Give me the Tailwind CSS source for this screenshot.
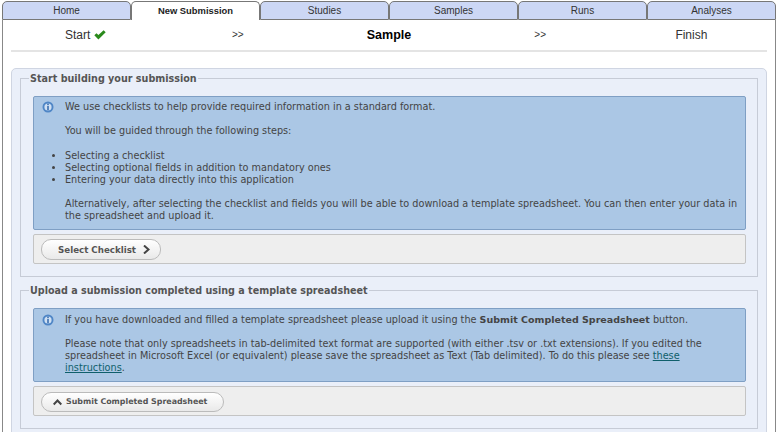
<!DOCTYPE html>
<html><head><meta charset="utf-8"><script src="https://cdn.jsdelivr.net/npm/@tailwindcss/browser@4"></script></head>
<body class="bg-white overflow-hidden">
<div class="w-[780px] h-[432px] overflow-hidden pl-[2px] pr-[4px] pt-[1px] font-['Liberation_Sans',sans-serif]">
  <nav class="flex h-[19px] text-[10px] text-[#333]">
    <div class="flex-1 flex items-center justify-center bg-[#ccd7f5] border border-[#777] rounded-t-[5px]">Home</div>
    <div class="flex-1 flex items-center justify-center bg-white border border-[#777] border-b-0 rounded-t-[5px] font-bold text-[#222] text-[9.4px]">New Submission</div>
    <div class="flex-1 flex items-center justify-center bg-[#ccd7f5] border border-[#777] rounded-t-[5px]">Studies</div>
    <div class="flex-1 flex items-center justify-center bg-[#ccd7f5] border border-[#777] rounded-t-[5px]">Samples</div>
    <div class="flex-1 flex items-center justify-center bg-[#ccd7f5] border border-[#777] rounded-t-[5px]">Runs</div>
    <div class="flex-1 flex items-center justify-center bg-[#ccd7f5] border border-[#777] rounded-t-[5px]">Analyses</div>
  </nav>
  <div class="border-x border-[#888] h-[412px] px-[8px]">
    <div class="grid grid-cols-5 h-[32px] items-center border-b-2 border-[#e4e4e4] text-[12px] text-[#333]">
      <div class="flex items-center justify-center gap-[4px] pr-[2px]"><span>Start</span>
        <svg width="12" height="10" viewBox="0 0 12 10"><path d="M0.3 5.3 L2.5 3.2 L4.4 5 L9.6 0.2 L11.7 2.2 L4.4 9.6 Z" fill="#2a8a1c"/></svg></div>
      <div class="text-center text-[10px] pb-[1px]">&gt;&gt;</div>
      <div class="text-center font-bold text-black text-[12.5px]">Sample</div>
      <div class="text-center text-[10px] pb-[1px]">&gt;&gt;</div>
      <div class="text-center">Finish</div>
    </div>
    <div class="mt-[16px] bg-[#eaeff9] border border-[#cfd5e2] rounded-[5px] px-[8px] pt-[1px] pb-[10px] font-['DejaVu_Sans',sans-serif] text-[9.7px] leading-[12px] text-[#444]">
      <fieldset class="border border-[#c6cbd6] pl-[12px] pr-[11px] pb-[12px] m-0 min-w-0 h-[207px]">
        <legend class="font-bold text-[#555] text-[9.6px] leading-[14px] pt-[2px] -ml-[4px] px-[1px]">Start building your submission</legend>
        <div class="mt-[10px] bg-[#abc7e5] border border-[#7f9fc4] rounded-[2px] pl-[31px] pr-[6px] pt-[4px] pb-[3px] h-[134px] relative">
          <svg class="absolute left-[8px] top-[4px]" width="12" height="12" viewBox="0 0 12 12"><circle cx="6" cy="6" r="5.5" fill="#4f86c6"/><circle cx="6" cy="6" r="3.6" fill="#cfe0f3"/><rect x="5.2" y="2.6" width="1.6" height="1.6" fill="#3b6fb0"/><rect x="5.2" y="5" width="1.6" height="4.2" fill="#3b6fb0"/></svg>
          <p>We use checklists to help provide required information in a standard format.</p>
          <p class="mt-[12px]">You will be guided through the following steps:</p>
          <ul class="mt-[12.5px] list-disc">
            <li>Selecting a checklist</li>
            <li>Selecting optional fields in addition to mandatory ones</li>
            <li>Entering your data directly into this application</li>
          </ul>
          <p class="mt-[12px]">Alternatively, after selecting the checklist and fields you will be able to download a template spreadsheet. You can then enter your data in the spreadsheet and upload it.</p>
        </div>
        <div class="mt-[4px] h-[30px] bg-[#eeeeee] border border-[#c4c4c4] rounded-[2px] pl-[7px] pt-[4px]">
          <button class="flex items-center gap-[7px] pl-[16px] w-[120px] h-[21px] bg-gradient-to-b from-white to-[#e9e9e9] border border-[#bbb] rounded-[10px] font-bold text-[#555] text-[8.7px]">Select Checklist
            <svg width="7" height="9" viewBox="0 0 7 9"><path d="M1 0.5 L5.5 4.5 L1 8.5" fill="none" stroke="#444" stroke-width="2"/></svg></button>
        </div>
      </fieldset>
      <fieldset class="mt-[5px] border border-[#c6cbd6] pl-[12px] pr-[11px] pb-[12px] m-0 min-w-0">
        <legend class="font-bold text-[#555] text-[9.6px] leading-[14px] pt-[2px] -ml-[4px] px-[1px]">Upload a submission completed using a template spreadsheet</legend>
        <div class="mt-[10px] bg-[#abc7e5] border border-[#7f9fc4] rounded-[2px] pl-[31px] pr-[6px] pt-[5px] h-[74px] relative">
          <svg class="absolute left-[8px] top-[5px]" width="12" height="12" viewBox="0 0 12 12"><circle cx="6" cy="6" r="5.5" fill="#4f86c6"/><circle cx="6" cy="6" r="3.6" fill="#cfe0f3"/><rect x="5.2" y="2.6" width="1.6" height="1.6" fill="#3b6fb0"/><rect x="5.2" y="5" width="1.6" height="4.2" fill="#3b6fb0"/></svg>
          <p>If you have downloaded and filled a template spreadsheet please upload it using the <b class="text-[9.5px]">Submit Completed Spreadsheet</b> button.</p>
          <p class="mt-[12px]">Please note that only spreadsheets in tab-delimited text format are supported (with either .tsv or .txt extensions). If you edited the spreadsheet in Microsoft Excel (or equivalent) please save the spreadsheet as Text (Tab delimited). To do this please see <a class="text-[#0f5f6b] underline">these</a> <a class="text-[#0f5f6b] underline">instructions</a>.</p>
        </div>
        <div class="mt-[4px] h-[30px] bg-[#eeeeee] border border-[#c4c4c4] rounded-[2px] pl-[7px] pt-[5px]">
          <button class="flex items-center gap-[4px] pl-[11px] w-[183px] h-[20px] bg-gradient-to-b from-white to-[#e9e9e9] border border-[#bbb] rounded-[10px] font-bold text-[#555] text-[7.9px]">
            <svg width="9" height="7" viewBox="0 0 9 7"><path d="M0.7 5.5 L4.5 1.5 L8.3 5.5" fill="none" stroke="#444" stroke-width="2"/></svg>Submit Completed Spreadsheet</button>
        </div>
      </fieldset>
    </div>
  </div>
</div>
</body></html>
